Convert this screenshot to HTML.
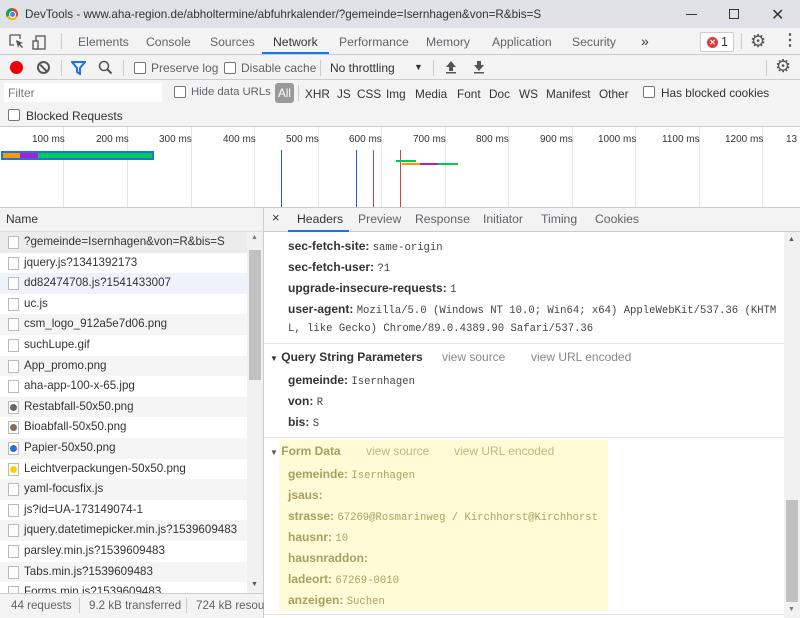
<!DOCTYPE html>
<html><head><meta charset="utf-8"><style>
*{box-sizing:border-box;margin:0;padding:0}
body{width:800px;height:618px;overflow:hidden;font-family:"Liberation Sans",sans-serif;font-size:12px;color:#333;background:#fff;position:relative}
.a{position:absolute}
.t{white-space:nowrap}
.cb{position:absolute;width:12px;height:12px;border:1px solid #767676;border-radius:2px;background:#fff}
.mono{font-family:"Liberation Mono",monospace;font-size:10.6px;color:#444}
.k{font-weight:bold;color:#333}
.row{position:absolute;left:0;width:247px;height:20.6px;line-height:20px;padding-left:24px;font-size:11.6px;color:#333;white-space:nowrap;overflow:hidden}
.ic{position:absolute;left:8px;top:4px;width:11px;height:13px;border:1px solid #bbb;background:#fff}
.gl{position:absolute;top:127px;width:1px;height:80px;background:#e6e6e6}
.lbl{position:absolute;top:134px;font-size:10px;color:#333}
.f{position:absolute;top:87px;color:#333;font-size:11.8px;white-space:nowrap}
</style></head><body>
<div class="a" style="left:0;top:0;width:800px;height:28px;background:#dee1e6"></div>
<div class="a" style="left:6px;top:8px;width:12px;height:12px;border-radius:50%;background:conic-gradient(#db4437 0 120deg,#f4b400 0 240deg,#0f9d58 0)"></div>
<div class="a" style="left:9.5px;top:11.5px;width:5px;height:5px;border-radius:50%;background:#4285f4;outline:1px solid #fff"></div>
<div class="a t" style="left:25px;top:8px;font-size:11.7px;color:#333">DevTools - www.aha-region.de/abholtermine/abfuhrkalender/?gemeinde=Isernhagen&amp;von=R&amp;bis=S</div>
<div class="a" style="left:686px;top:14px;width:11px;height:1px;background:#333"></div>
<div class="a" style="left:729px;top:9px;width:10px;height:10px;border:1px solid #333"></div>
<div class="a t" style="left:771px;top:5px;font-size:16px;color:#333">✕</div>
<div class="a" style="left:0;top:28px;width:800px;height:27px;background:#f3f3f3;border-bottom:1px solid #ccc"></div>
<svg class="a" style="left:9px;top:34px" width="40" height="16"><path d="M1 1h10v4M1 1v10h4" fill="none" stroke="#555" stroke-width="1.3"/><path d="M7 6l7 3-3 1 3 3-1 1-3-3-1 3z" fill="#555"/><rect x="27" y="2" width="9" height="13" fill="none" stroke="#555" stroke-width="1.3"/><rect x="24" y="7" width="5" height="8" fill="#f3f3f3" stroke="#555" stroke-width="1.3"/></svg>
<div class="a" style="left:61px;top:33px;width:1px;height:16px;background:#ccc"></div>
<div class="a t" style="left:78px;top:35px;color:#5f6368;font-size:12.2px">Elements</div>
<div class="a t" style="left:146px;top:35px;color:#5f6368;font-size:12.2px">Console</div>
<div class="a t" style="left:210px;top:35px;color:#5f6368;font-size:12.2px">Sources</div>
<div class="a t" style="left:273px;top:35px;color:#333;font-size:12.2px">Network</div>
<div class="a" style="left:262px;top:52px;width:67px;height:2px;background:#1a73e8"></div>
<div class="a t" style="left:339px;top:35px;color:#5f6368;font-size:12.2px">Performance</div>
<div class="a t" style="left:426px;top:35px;color:#5f6368;font-size:12.2px">Memory</div>
<div class="a t" style="left:492px;top:35px;color:#5f6368;font-size:12.2px">Application</div>
<div class="a t" style="left:572px;top:35px;color:#5f6368;font-size:12.2px">Security</div>
<div class="a t" style="left:641px;top:33px;color:#333;font-size:14px">»</div>
<div class="a" style="left:700px;top:32px;width:34px;height:20px;border:1px solid #ccc;border-radius:2px;background:#fff"></div>
<div class="a" style="left:707px;top:37px;width:11px;height:11px;border-radius:50%;background:#e53935;color:#fff;font-size:8px;line-height:11px;text-align:center;font-weight:bold">✕</div>
<div class="a t" style="left:721px;top:35px;font-size:12.5px">1</div>
<div class="a" style="left:741px;top:33px;width:1px;height:16px;background:#ccc"></div>
<div class="a t" style="left:750px;top:31px;font-size:18px;color:#555">⚙</div>
<div class="a t" style="left:782px;top:30px;font-size:16px;color:#555;font-weight:bold">⋮</div>
<div class="a" style="left:0;top:55px;width:800px;height:25px;background:#f3f3f3;border-bottom:1px solid #ccc"></div>
<div class="a" style="left:10px;top:61px;width:13px;height:13px;border-radius:50%;background:#e00"></div>
<div class="a" style="left:37px;top:61px;width:13px;height:13px;border-radius:50%;border:2px solid #555"></div>
<div class="a" style="left:39px;top:67px;width:9px;height:2px;background:#555;transform:rotate(45deg)"></div>
<div class="a" style="left:61px;top:60px;width:1px;height:16px;background:#ccc"></div>
<svg class="a" style="left:71px;top:61px" width="15" height="14"><path d="M1 1h13l-5 6v6l-3-2v-4z" fill="none" stroke="#1a73e8" stroke-width="2"/></svg>
<svg class="a" style="left:98px;top:60px" width="15" height="15"><circle cx="6" cy="6" r="4.5" fill="none" stroke="#555" stroke-width="1.6"/><path d="M9.5 9.5l4 4" stroke="#555" stroke-width="2"/></svg>
<div class="a" style="left:123px;top:60px;width:1px;height:16px;background:#ccc"></div>
<div class="cb" style="left:134px;top:62px"></div><div class="a t" style="left:151px;top:61px;color:#5f6368;font-size:12px">Preserve log</div>
<div class="cb" style="left:224px;top:62px"></div><div class="a t" style="left:241px;top:61px;color:#5f6368;font-size:12px">Disable cache</div>
<div class="a" style="left:320px;top:60px;width:1px;height:16px;background:#ccc"></div>
<div class="a t" style="left:330px;top:61px;color:#333;font-size:12px">No throttling</div>
<div class="a t" style="left:414px;top:62px;color:#333;font-size:9px">▼</div>
<div class="a" style="left:433px;top:60px;width:1px;height:16px;background:#ccc"></div>
<svg class="a" style="left:445px;top:60px" width="12" height="14"><path d="M6 1l5 6H8v4H4V7H1z" fill="#555"/><rect x="1" y="12" width="10" height="1.5" fill="#555"/></svg>
<svg class="a" style="left:473px;top:60px" width="12" height="14"><path d="M6 11l5-6H8V1H4v4H1z" fill="#555"/><rect x="1" y="12" width="10" height="1.5" fill="#555"/></svg>
<div class="a" style="left:766px;top:60px;width:1px;height:16px;background:#ccc"></div>
<div class="a t" style="left:775px;top:56px;font-size:18px;color:#555">⚙</div>
<div class="a" style="left:0;top:80px;width:800px;height:47px;background:#f3f3f3;border-bottom:1px solid #ccc"></div>
<div class="a" style="left:4px;top:83px;width:158px;height:19px;background:#fff"></div>
<div class="a t" style="left:8px;top:86px;color:#777;font-size:12px">Filter</div>
<div class="cb" style="left:174px;top:86px"></div><div class="a t" style="left:191px;top:86px;color:#5f6368;font-size:11.3px">Hide data URLs</div>
<div class="a" style="left:275px;top:83px;width:19px;height:20px;border-radius:3px;background:#999;color:#fff;font-size:11.8px;line-height:20px;text-align:center">All</div>
<div class="a" style="left:298px;top:85px;width:1px;height:16px;background:#ccc"></div>
<div class="f" style="left:305px">XHR</div>
<div class="f" style="left:337px">JS</div>
<div class="f" style="left:357px">CSS</div>
<div class="f" style="left:386px">Img</div>
<div class="f" style="left:415px">Media</div>
<div class="f" style="left:457px">Font</div>
<div class="f" style="left:489px">Doc</div>
<div class="f" style="left:519px">WS</div>
<div class="f" style="left:546px">Manifest</div>
<div class="f" style="left:599px">Other</div>
<div class="cb" style="left:643px;top:86px"></div><div class="a t" style="left:661px;top:86px;color:#333;font-size:11.8px">Has blocked cookies</div>
<div class="cb" style="left:8px;top:109px"></div><div class="a t" style="left:26px;top:109px;color:#333;font-size:12px">Blocked Requests</div>
<div class="gl" style="left:63px"></div><div class="gl" style="left:127px"></div><div class="gl" style="left:191px"></div><div class="gl" style="left:254px"></div><div class="gl" style="left:318px"></div><div class="gl" style="left:381px"></div><div class="gl" style="left:445px"></div><div class="gl" style="left:508px"></div><div class="gl" style="left:572px"></div><div class="gl" style="left:635px"></div><div class="gl" style="left:699px"></div><div class="gl" style="left:762px"></div>
<div class="lbl" style="left:32px">100 ms</div><div class="lbl" style="left:96px">200 ms</div><div class="lbl" style="left:159px">300 ms</div><div class="lbl" style="left:223px">400 ms</div><div class="lbl" style="left:286px">500 ms</div><div class="lbl" style="left:349px">600 ms</div><div class="lbl" style="left:413px">700 ms</div><div class="lbl" style="left:476px">800 ms</div><div class="lbl" style="left:540px">900 ms</div><div class="lbl" style="left:598px">1000 ms</div><div class="lbl" style="left:662px">1100 ms</div><div class="lbl" style="left:725px">1200 ms</div><div class="lbl" style="left:786px">13</div>
<div class="a" style="left:1px;top:151px;width:153px;height:9px;border:2px solid #1a73e8;background:#0c5"></div>
<div class="a" style="left:3px;top:153px;width:17px;height:5px;background:#f90"></div>
<div class="a" style="left:20px;top:153px;width:18px;height:5px;background:#a2c"></div>
<div class="a" style="left:281px;top:150px;width:1px;height:57px;background:#1a5fd8"></div>
<div class="a" style="left:356px;top:150px;width:1px;height:57px;background:#1a5fd8"></div>
<div class="a" style="left:373px;top:150px;width:1px;height:57px;background:#c44"></div>
<div class="a" style="left:400px;top:150px;width:1px;height:57px;background:#c44"></div>
<div class="a" style="left:396px;top:160px;width:20px;height:2px;background:#0c5"></div>
<div class="a" style="left:402px;top:163px;width:18px;height:2px;background:#f90"></div>
<div class="a" style="left:420px;top:163px;width:18px;height:2px;background:#a2c"></div>
<div class="a" style="left:438px;top:163px;width:20px;height:2px;background:#0c5"></div>
<div class="a" style="left:0;top:207px;width:263px;height:25px;background:#f3f3f3;border-top:1px solid #ccc;border-bottom:1px solid #ddd"></div>
<div class="a t" style="left:6px;top:212px;font-size:12px">Name</div>
<div class="a" style="left:263px;top:207px;width:1px;height:411px;background:#ccc"></div>
<div class="row" style="top:232px;background:#ececec"><div class="ic"></div>?gemeinde=Isernhagen&amp;von=R&amp;bis=S</div>
<div class="row" style="top:252.6px"><div class="ic"></div>jquery.js?1341392173</div>
<div class="row" style="top:273.2px;background:#eef3fb"><div class="ic"></div>dd82474708.js?1541433007</div>
<div class="row" style="top:293.8px"><div class="ic"></div>uc.js</div>
<div class="row" style="top:314.4px;background:#f5f5f5"><div class="ic"></div>csm_logo_912a5e7d06.png</div>
<div class="row" style="top:335px"><div class="ic"></div>suchLupe.gif</div>
<div class="row" style="top:355.6px;background:#f5f5f5"><div class="ic"></div>App_promo.png</div>
<div class="row" style="top:376.2px"><div class="ic"></div>aha-app-100-x-65.jpg</div>
<div class="row" style="top:396.8px;background:#f5f5f5"><div class="ic"><div style="margin:2px 1px;width:7px;height:7px;border-radius:50%;background:#666"></div></div>Restabfall-50x50.png</div>
<div class="row" style="top:417.4px"><div class="ic"><div style="margin:2px 1px;width:7px;height:7px;border-radius:50%;background:#8a6a5a"></div></div>Bioabfall-50x50.png</div>
<div class="row" style="top:438px;background:#f5f5f5"><div class="ic"><div style="margin:2px 1px;width:7px;height:7px;border-radius:50%;background:#2a6fc9"></div></div>Papier-50x50.png</div>
<div class="row" style="top:458.6px"><div class="ic"><div style="margin:2px 1px;width:7px;height:7px;border-radius:50%;background:#f2d200"></div></div>Leichtverpackungen-50x50.png</div>
<div class="row" style="top:479.2px;background:#f5f5f5"><div class="ic"></div>yaml-focusfix.js</div>
<div class="row" style="top:499.8px"><div class="ic"></div>js?id=UA-173149074-1</div>
<div class="row" style="top:520.4px;background:#f5f5f5"><div class="ic"></div>jquery.datetimepicker.min.js?1539609483</div>
<div class="row" style="top:541px"><div class="ic"></div>parsley.min.js?1539609483</div>
<div class="row" style="top:561.6px;background:#f5f5f5"><div class="ic"></div>Tabs.min.js?1539609483</div>
<div class="row" style="top:582.2px;height:11px;overflow:hidden"><div class="ic"></div>Forms.min.js?1539609483</div>
<div class="a" style="left:247px;top:232px;width:16px;height:361px;background:#f1f1f1"></div>
<div class="a" style="left:249px;top:250px;width:12px;height:130px;background:#c1c1c1"></div>
<div class="a t" style="left:251px;top:234px;font-size:7px;color:#777">▲</div>
<div class="a t" style="left:251px;top:581px;font-size:7px;color:#555">▼</div>
<div class="a" style="left:0;top:593px;width:263px;height:25px;background:#f3f3f3;border-top:1px solid #ccc"></div>
<div class="a t" style="left:11px;top:599px;color:#5f6368;font-size:11.6px">44 requests</div>
<div class="a" style="left:79px;top:598px;width:1px;height:15px;background:#ccc"></div>
<div class="a t" style="left:89px;top:599px;color:#5f6368;font-size:11.6px">9.2 kB transferred</div>
<div class="a" style="left:186px;top:598px;width:1px;height:15px;background:#ccc"></div>
<div class="a t" style="left:196px;top:599px;color:#5f6368;font-size:11.6px">724 kB resou</div>
<div class="a" style="left:264px;top:207px;width:536px;height:25px;background:#f3f3f3;border-top:1px solid #ccc;border-bottom:1px solid #ccc"></div>
<div class="a t" style="left:272px;top:210px;font-size:13px;color:#333">×</div>
<div class="a t" style="left:297px;top:212px;font-size:12.2px;color:#333">Headers</div>
<div class="a" style="left:288px;top:230px;width:61px;height:2px;background:#1a73e8"></div>
<div class="a t" style="left:358px;top:212px;font-size:12.2px;color:#5f6368">Preview</div>
<div class="a t" style="left:415px;top:212px;font-size:12.2px;color:#5f6368">Response</div>
<div class="a t" style="left:483px;top:212px;font-size:12.2px;color:#5f6368">Initiator</div>
<div class="a t" style="left:541px;top:212px;font-size:12.2px;color:#5f6368">Timing</div>
<div class="a t" style="left:595px;top:212px;font-size:12.2px;color:#5f6368">Cookies</div>
<div class="a" style="left:784px;top:232px;width:16px;height:386px;background:#f1f1f1"></div>
<div class="a" style="left:786px;top:500px;width:12px;height:102px;background:#c1c1c1"></div>
<div class="a t" style="left:788px;top:236px;font-size:7px;color:#555">▲</div>
<div class="a t" style="left:788px;top:606px;font-size:7px;color:#777">▼</div>
<div class="a t" style="left:288px;top:239px"><span class="k">sec-fetch-site:</span> <span class="mono">same-origin</span></div>
<div class="a t" style="left:288px;top:260px"><span class="k">sec-fetch-user:</span> <span class="mono">?1</span></div>
<div class="a t" style="left:288px;top:281px"><span class="k">upgrade-insecure-requests:</span> <span class="mono">1</span></div>
<div class="a t" style="left:288px;top:302px"><span class="k">user-agent:</span> <span class="mono">Mozilla/5.0 (Windows NT 10.0; Win64; x64) AppleWebKit/537.36 (KHTM</span></div>
<div class="a t mono" style="left:288px;top:323px">L, like Gecko) Chrome/89.0.4389.90 Safari/537.36</div>
<div class="a" style="left:264px;top:343px;width:520px;height:1px;background:#e6e6e6"></div>
<div class="a t" style="left:270px;top:350px"><span style="font-size:8px">▼</span> <span class="k">Query String Parameters</span></div>
<div class="a t" style="left:442px;top:350px;color:#888">view source</div>
<div class="a t" style="left:531px;top:350px;color:#888">view URL encoded</div>
<div class="a t" style="left:288px;top:373px"><span class="k">gemeinde:</span> <span class="mono">Isernhagen</span></div>
<div class="a t" style="left:288px;top:394px"><span class="k">von:</span> <span class="mono">R</span></div>
<div class="a t" style="left:288px;top:415px"><span class="k">bis:</span> <span class="mono">S</span></div>
<div class="a" style="left:264px;top:437px;width:520px;height:1px;background:#e6e6e6"></div>
<div class="a" style="left:279px;top:440px;width:329px;height:171px;background:#fffbd6"></div>
<div style="color:#a8a060">
<div class="a t" style="left:270px;top:444px"><span style="font-size:8px;color:#555">▼</span> <b>Form Data</b></div>
<div class="a t" style="left:366px;top:444px;color:#c0b880">view source</div>
<div class="a t" style="left:454px;top:444px;color:#c0b880">view URL encoded</div>
<div class="a t" style="left:288px;top:467px"><b>gemeinde:</b> <span class="mono" style="color:#aca264">Isernhagen</span></div>
<div class="a t" style="left:288px;top:488px"><b>jsaus:</b></div>
<div class="a t" style="left:288px;top:509px"><b>strasse:</b> <span class="mono" style="color:#aca264">67269@Rosmarinweg / Kirchhorst@Kirchhorst</span></div>
<div class="a t" style="left:288px;top:530px"><b>hausnr:</b> <span class="mono" style="color:#aca264">10</span></div>
<div class="a t" style="left:288px;top:551px"><b>hausnraddon:</b></div>
<div class="a t" style="left:288px;top:572px"><b>ladeort:</b> <span class="mono" style="color:#aca264">67269-0010</span></div>
<div class="a t" style="left:288px;top:593px"><b>anzeigen:</b> <span class="mono" style="color:#aca264">Suchen</span></div>
</div>
<div class="a" style="left:264px;top:614px;width:520px;height:1px;background:#e6e6e6"></div>
</body></html>
